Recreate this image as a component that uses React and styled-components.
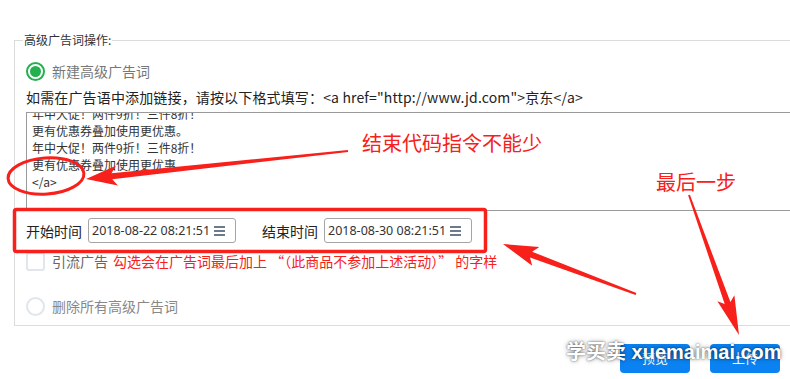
import React from "react";
import styled, { createGlobalStyle } from "styled-components";

const GlobalStyle = createGlobalStyle`
  html, body {
    margin: 0;
    padding: 0;
    overflow: hidden;
    background: #fff;
  }
  body {
    font-family: "Noto Sans CJK SC", "Noto Sans", sans-serif;
  }
`;

const RED = "#f7201a";

const Page = styled.div`
  position: relative;
  width: 790px;
  height: 379px;
  overflow: hidden;
`;

const Fieldset = styled.fieldset`
  margin: 32px -30px 0 14px;
  padding: 0 0 9px 11px;
  border: 1px solid #dcdcdc;
  border-right: none;
  min-width: 0;
`;

const Legend = styled.legend`
  margin-left: -3px;
  padding: 0 1px;
  font-size: 12px;
  line-height: 16px;
  color: #333;
`;

const OptionRow = styled.label`
  display: flex;
  align-items: center;
  gap: 7px;
  height: ${({ $h }) => $h || 20}px;
  margin-top: ${({ $top }) => $top || 0}px;
  font-size: 14px;
  color: ${({ $color }) => $color || "#777"};
`;

const Radio = styled.span`
  box-sizing: border-box;
  width: 19px;
  height: 19px;
  border-radius: 50%;
  border: 2px solid ${({ $on }) => ($on ? "#22b14c" : "#e1e6ec")};
  display: flex;
  align-items: center;
  justify-content: center;
  &::after {
    content: "";
    width: 11px;
    height: 11px;
    border-radius: 50%;
    background: ${({ $on }) => ($on ? "#22b14c" : "transparent")};
  }
`;

const Checkbox = styled.span`
  box-sizing: border-box;
  width: 19px;
  height: 19px;
  border-radius: 3px;
  border: 2px solid #e1e6ec;
`;

const Hint = styled.div`
  margin-top: 5px;
  font-size: 14px;
  line-height: 20px;
  letter-spacing: 0.15px;
  color: #222;
`;

// the ad text box, shown scrolled down a little as in the screenshot
const AdBox = styled.div`
  box-sizing: border-box;
  margin-top: 5px;
  width: 800px;
  height: 99px;
  padding: 2px 5px;
  border: 1px solid #9a9a9a;
  overflow: hidden;
`;

const AdLines = styled.div`
  margin-top: ${({ $scroll }) => -$scroll}px;
  font-size: 12px;
  line-height: 17px;
  color: #333;
  white-space: pre;
`;

const DateRow = styled.div`
  display: flex;
  align-items: center;
  margin-top: 7px;
  height: 25px;
`;

const DateLabel = styled.span`
  font-size: 14px;
  color: #222;
  margin-right: 6px;
  margin-left: ${({ $gap }) => $gap || 0}px;
`;

const DateBox = styled.div`
  box-sizing: border-box;
  width: 148px;
  height: 25px;
  border: 1px solid #a5a5a5;
  border-radius: 3px;
  display: flex;
  align-items: center;
  justify-content: space-between;
  padding: 0 10px 0 3px;
  font-family: "Noto Sans", sans-serif;
  font-size: 12.5px;
  color: #333;
`;

const RedNote = styled.span`
  color: ${RED};
  margin-left: -2px;
`;

const ButtonBar = styled.div`
  display: flex;
  justify-content: flex-end;
  gap: 20px;
  margin-top: 18px;
  padding-right: 10px;
`;

const Button = styled.button`
  width: 70px;
  height: 29px;
  border: none;
  border-radius: 4px;
  background: #0b82f2;
  color: #fff;
  font-family: "Noto Sans CJK SC", sans-serif;
  font-size: 13px;
  line-height: 20px;
  padding: 4px 0 5px;
`;

const Overlay = styled.svg`
  position: absolute;
  left: 0;
  top: 0;
  pointer-events: none;
`;

const Callout = styled.div`
  position: absolute;
  left: ${({ $x }) => $x}px;
  top: ${({ $y }) => $y}px;
  font-size: 20px;
  line-height: 24px;
  color: ${RED};
  white-space: nowrap;
`;

const Watermark = styled.div`
  position: absolute;
  left: 566px;
  top: 339px;
  font-family: "Liberation Sans", "Noto Sans CJK SC", sans-serif;
  font-size: 20px;
  line-height: 26px;
  font-weight: 700;
  color: #fff;
  white-space: nowrap;
  text-shadow: 0 0 2px rgba(0, 0, 0, 0.6), 0 0 5px rgba(0, 0, 0, 0.4);
`;

const MenuIcon = () => (
  <svg width="11" height="10" viewBox="0 0 11 10">
    <rect x="0" y="0" width="11" height="2" fill="#6c7b8c" />
    <rect x="0" y="4" width="11" height="2" fill="#6c7b8c" />
    <rect x="0" y="8" width="11" height="2" fill="#6c7b8c" />
  </svg>
);

// polygon for a hand drawn callout arrow, thin tail -> wide head
const arrow = (x1, y1, x2, y2, tailW, neckW, headLen, headW) => {
  const dx = x2 - x1;
  const dy = y2 - y1;
  const len = Math.hypot(dx, dy);
  const ux = dx / len;
  const uy = dy / len;
  const px = -uy;
  const py = ux;
  const nx = x2 - ux * headLen;
  const ny = y2 - uy * headLen;
  const bx = nx - ux * 5;
  const by = ny - uy * 5;
  const pts = [
    [x1 + (px * tailW) / 2, y1 + (py * tailW) / 2],
    [nx + (px * neckW) / 2, ny + (py * neckW) / 2],
    [bx + (px * headW) / 2, by + (py * headW) / 2],
    [x2, y2],
    [bx - (px * headW) / 2, by - (py * headW) / 2],
    [nx - (px * neckW) / 2, ny - (py * neckW) / 2],
    [x1 - (px * tailW) / 2, y1 - (py * tailW) / 2],
  ];
  return pts.map((p) => p.map((v) => v.toFixed(1)).join(",")).join(" ");
};

const adLines = [
  "年中大促！两件9折！三件8折！",
  "更有优惠券叠加使用更优惠。",
  "年中大促！两件9折！三件8折！",
  "更有优惠券叠加使用更优惠。",
  "</a>",
].join("\n");

export default function App() {
  return (
    <Page>
      <GlobalStyle />
      <Fieldset>
        <Legend>高级广告词操作:</Legend>
        <OptionRow $h={22} $top={12}>
          <Radio $on />
          新建高级广告词
        </OptionRow>
        <Hint>
          如需在广告语中添加链接，请按以下格式填写：&lt;a href="http://www.jd.com"&gt;京东&lt;/a&gt;
        </Hint>
        <AdBox>
          <AdLines $scroll={10.5}>{adLines}</AdLines>
        </AdBox>
        <DateRow>
          <DateLabel>开始时间</DateLabel>
          <DateBox>
            2018-08-22 08:21:51
            <MenuIcon />
          </DateBox>
          <DateLabel $gap={26}>结束时间</DateLabel>
          <DateBox>
            2018-08-30 08:21:51
            <MenuIcon />
          </DateBox>
        </DateRow>
        <OptionRow $top={8} $color="#666">
          <Checkbox />
          引流广告
          <RedNote>勾选会在广告词最后加上 “（此商品不参加上述活动）” 的字样</RedNote>
        </OptionRow>
        <OptionRow $top={25} $color="#888">
          <Radio />
          删除所有高级广告词
        </OptionRow>
      </Fieldset>
      <ButtonBar>
        <Button>预览</Button>
        <Button>上传</Button>
      </ButtonBar>

      <Overlay width="790" height="379">
        <ellipse cx="46" cy="176" rx="38" ry="18" fill="none" stroke={RED} strokeWidth="3" transform="rotate(-4 46 176)" />
        <rect x="14.5" y="209.5" width="471" height="42" rx="2" fill="none" stroke={RED} strokeWidth="3.5" />
        <polygon points={arrow(348, 151, 86, 179, 2, 6, 26, 20)} fill={RED} />
        <polygon points={arrow(636, 294, 503, 244, 2, 6, 30, 20)} fill={RED} />
        <polygon points={arrow(689, 195, 739, 335, 2, 6, 34, 18)} fill={RED} />
      </Overlay>
      <Callout $x={362} $y={131}>结束代码指令不能少</Callout>
      <Callout $x={656} $y={170}>最后一步</Callout>
      <Watermark>学买卖 xuemaimai.com</Watermark>
    </Page>
  );
}
